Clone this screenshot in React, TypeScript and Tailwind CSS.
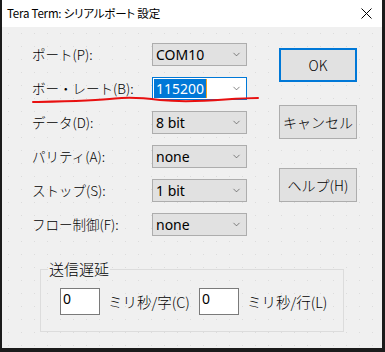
import { ChevronDown } from "lucide-react";

const jp = "font-['Noto_Sans_CJK_JP',sans-serif]";
const latin = "font-['Noto_Sans','Noto_Sans_CJK_JP',sans-serif]";

interface Field {
  label: string;
  value: string;
  focused?: boolean;
}

const fields: Field[] = [
  { label: "ポート(P):", value: "COM10" },
  { label: "ボー・レート(B):", value: "115200", focused: true },
  { label: "データ(D):", value: "8 bit" },
  { label: "パリティ(A):", value: "none" },
  { label: "ストップ(S):", value: "1 bit" },
  { label: "フロー制御(F):", value: "none" },
];

function Combo({ value, focused }: { value: string; focused?: boolean }) {
  return (
    <div
      className={`w-[95px] h-[23px] flex items-center justify-between pl-[1px] pr-[4px] border ${
        focused ? "bg-white border-[#0078d7]" : "bg-[#e1e1e1] border-[#adadad]"
      }`}
    >
      {focused ? (
        <span className={`${latin} text-[14px] leading-[19px] h-[19px] px-[2px] bg-[#0078d7] text-white border-r border-[#f7a21b]`}>
          {value}
        </span>
      ) : (
        <span className={`${latin} text-[14px] leading-[19px] px-[2px] text-black`}>{value}</span>
      )}
      <ChevronDown size={11} strokeWidth={1.4} className="text-[#444]" />
    </div>
  );
}

function Button({ children, primary }: { children: React.ReactNode; primary?: boolean }) {
  return (
    <div
      className={`w-[78px] h-[34px] flex items-center justify-center bg-[#e1e1e1] ${jp} font-light text-[14px] text-black ${
        primary ? "border-2 border-[#0078d7]" : "border border-[#adadad]"
      }`}
    >
      {children}
    </div>
  );
}

export default function App() {
  return (
    <div className="relative w-[385px] h-[352px] bg-[#1b1b1b] pl-[2px] pr-[3px] pb-[4px] flex flex-col">
      {/* title bar */}
      <div className="h-[27px] bg-white flex items-center justify-between pl-[5px] pr-[10px] shrink-0">
        <span className={`${jp} text-[11.5px] tracking-[-0.2px] text-black [font-feature-settings:'palt']`}>
          Tera Term: シリアルポート 設定
        </span>
        <svg width="11" height="11" viewBox="0 0 11 11" className="text-black">
          <path d="M0.5 0.5 L10.5 10.5 M10.5 0.5 L0.5 10.5" stroke="currentColor" strokeWidth="1" />
        </svg>
      </div>

      {/* body */}
      <div className="flex-1 bg-[#f0f0f0] bg-[radial-gradient(circle,#dcdcdc_0.7px,transparent_0.8px)] bg-[size:13px_13px] flex flex-col">
        <div className="flex pt-[16px]">
          <div className="flex flex-col gap-[11px] pl-[30px]">
            {fields.map((f) => (
              <div key={f.label} className="flex items-center h-[23px]">
                <span className={`w-[120px] ${jp} font-light text-[13.5px] text-black`}>{f.label}</span>
                <Combo value={f.value} focused={f.focused} />
              </div>
            ))}
          </div>
          <div className="flex flex-col pl-[32px] pt-[5px]">
            <Button primary>OK</Button>
            <div className="h-[23px]" />
            <Button>キャンセル</Button>
            <div className="h-[29px]" />
            <Button>ヘルプ(H)</Button>
          </div>
        </div>

        {/* send delay group */}
        <div className="relative ml-[38px] mt-[33px] w-[304px] h-[63px] border border-[#dcdcdc]">
          <span className={`absolute left-[7px] -top-[11px] px-[1px] bg-[#f0f0f0] ${jp} font-light text-[15px] text-black leading-[20px]`}>
            送信遅延
          </span>
          <div className="flex items-center pl-[19px] pt-[18px]">
            <div className={`w-[40px] h-[27px] bg-white border border-[#7a7a7a] pl-[2px] ${latin} text-[14px] leading-[20px] text-black`}>
              0
            </div>
            <span className={`ml-[8px] ${jp} font-light text-[14.5px] text-black`}>ミリ秒/字(C)</span>
            <div className={`ml-[9px] w-[40px] h-[27px] bg-white border border-[#7a7a7a] pl-[2px] ${latin} text-[14px] leading-[20px] text-black`}>
              0
            </div>
            <span className={`ml-[8px] ${jp} font-light text-[14.5px] text-black`}>ミリ秒/行(L)</span>
          </div>
        </div>
      </div>

      {/* red hand-drawn underline annotation */}
      <svg className="absolute inset-0 pointer-events-none" width="385" height="352">
        <path
          d="M33 102 C60 101.5 95 101 115 98.5 C130 96.5 145 98 160 100 C180 102 205 101 225 99.5 C240 98.5 250 98 258 98"
          fill="none"
          stroke="#e81010"
          strokeWidth="2"
          strokeLinecap="round"
        />
      </svg>
    </div>
  );
}
